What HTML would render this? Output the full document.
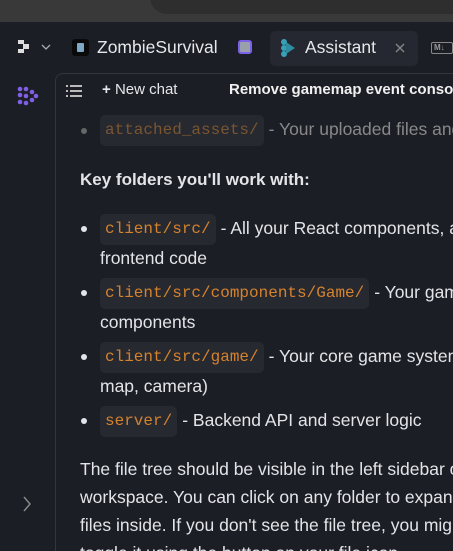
<!DOCTYPE html>
<html><head><meta charset="utf-8"><style>
*{margin:0;padding:0;box-sizing:border-box}
html,body{width:453px;height:551px;overflow:hidden}
body{background:#1c1e25;font-family:"Liberation Sans",sans-serif;position:relative;color:#e6e7ea}
.top{position:absolute;left:0;top:0;width:453px;height:22px;background:#393939;overflow:hidden}
.pill{position:absolute;left:150px;top:-20px;width:320px;height:34px;border-radius:17px;background:#2e2e2e}
.panel{position:absolute;left:55px;top:73px;width:398px;height:478px;border-left:1px solid #33363f;border-top:1px solid #33363f;border-top-left-radius:8px;background:#1c1e25}
.abs{position:absolute;white-space:nowrap}
.t{font-size:17.5px;color:#e3e4e8}
.code{display:inline-block;font-family:"Liberation Mono",monospace;font-size:16px;color:#d5822d;background:#272930;border-radius:5px;padding:0 5px;height:31px;line-height:31px;margin-right:5px;vertical-align:middle}
.dot{position:absolute;width:6px;height:6px;border-radius:3px;background:#e3e4e8}
</style></head><body>
<div class="top"><div class="pill"></div></div>
<svg class="abs" style="left:18px;top:40px" width="16" height="14"><rect x="0" y="0" width="6" height="4" fill="#ddd"/><rect x="5" y="4" width="6" height="5" fill="#ddd"/><rect x="0" y="9" width="6" height="4" fill="#ddd"/></svg>
<svg class="abs" style="left:41px;top:44px" width="10" height="6"><path d="M1 1 L5 5 L9 1" stroke="#aaa" stroke-width="1.3" fill="none"/></svg>
<div class="abs" style="left:72px;top:39px;width:17px;height:17px;background:#0a0a0a;border-radius:3px"><div style="margin:4px 5px;width:7px;height:9px;background:#7fa7c6;border-radius:1px"></div></div>
<div class="abs" style="left:97px;top:37px;font-size:17.5px">ZombieSurvival</div>
<div class="abs" style="left:238px;top:40px;width:14px;height:14px;background:#9aa0ab;border:2px solid #7b62e8;border-radius:3px"></div>
<div class="abs" style="left:270px;top:31px;width:148px;height:35px;background:#252830;border-radius:5px"></div>
<svg class="abs" style="left:280px;top:38px" width="16" height="20"><circle cx="4" cy="4" r="3" fill="#3aa0b5"/><circle cx="4" cy="10" r="3" fill="#3aa0b5"/><circle cx="4" cy="16" r="3" fill="#3aa0b5"/><path d="M6 4 L15 10 L6 16Z" fill="#2d8ca0"/></svg>
<div class="abs" style="left:305px;top:37px;font-size:17.5px">Assistant</div>
<svg class="abs" style="left:395px;top:43px" width="10" height="10"><path d="M1 1L9 9M9 1L1 9" stroke="#888" stroke-width="1.3"/></svg>
<div class="abs" style="left:431px;top:42px;width:22px;height:12px;border:1.5px solid #888;border-radius:2px;font-size:8px;color:#999;line-height:9px;padding-left:2px;font-weight:bold">M↓</div>
<svg class="abs" style="left:17px;top:86px" width="22" height="20"><g fill="#7e5fe6"><circle cx="3" cy="3" r="2.3"/><circle cx="9" cy="3" r="2.3"/><circle cx="3" cy="9" r="2.3"/><circle cx="15" cy="6" r="2.3"/><circle cx="9" cy="10" r="2.3"/><circle cx="19" cy="10" r="2.3"/><circle cx="3" cy="16" r="2.3"/><circle cx="9" cy="17" r="2.3"/><circle cx="15" cy="14" r="2.3"/></g></svg>
<svg class="abs" style="left:22px;top:496px" width="10" height="16"><path d="M2 1 L8 8 L2 15" stroke="#888" stroke-width="1.5" fill="none"/></svg>
<div class="panel"></div>
<svg class="abs" style="left:66px;top:84px" width="16" height="13"><g fill="#bbb"><rect x="0" y="1" width="2" height="2"/><rect x="4" y="1" width="12" height="2"/><rect x="0" y="6" width="2" height="2"/><rect x="4" y="6" width="12" height="2"/><rect x="0" y="11" width="2" height="2"/><rect x="4" y="11" width="12" height="2"/></g></svg>
<div class="abs" style="left:102px;top:81px;font-size:15px;font-weight:bold">+ <span style="font-weight:normal">New chat</span></div>
<div class="abs" style="left:229px;top:81px;font-size:15px;font-weight:bold;color:#f0f0f0">Remove gamemap event console</div>

<div class="dot" style="left:81px;top:128px;background:#666"></div>
<div class="abs t" style="left:100px;top:115px;color:#888"><span class="code" style="color:#7a5530">attached_assets/</span>- Your uploaded files and</div>
<div class="abs t" style="left:80px;top:170px;font-weight:bold;font-size:17px">Key folders you'll work with:</div>
<div class="dot" style="left:81px;top:226px"></div>
<div class="abs t" style="left:100px;top:214px"><span class="code">client/src/</span>- All your React components, and</div>
<div class="abs t" style="left:100px;top:248px">frontend code</div>
<div class="dot" style="left:81px;top:290px"></div>
<div class="abs t" style="left:100px;top:278px"><span class="code">client/src/components/Game/</span>- Your game</div>
<div class="abs t" style="left:100px;top:312px">components</div>
<div class="dot" style="left:81px;top:354px"></div>
<div class="abs t" style="left:100px;top:342px"><span class="code">client/src/game/</span>- Your core game systems</div>
<div class="abs t" style="left:100px;top:376px">map, camera)</div>
<div class="dot" style="left:81px;top:418px"></div>
<div class="abs t" style="left:100px;top:406px"><span class="code">server/</span>- Backend API and server logic</div>
<div class="abs t" style="left:80px;top:459px">The file tree should be visible in the left sidebar of</div>
<div class="abs t" style="left:80px;top:487px">workspace. You can click on any folder to expand</div>
<div class="abs t" style="left:80px;top:515px">files inside. If you don't see the file tree, you might</div>
<div class="abs t" style="left:80px;top:543px">toggle it using the button on your file icon</div>
</body></html>
